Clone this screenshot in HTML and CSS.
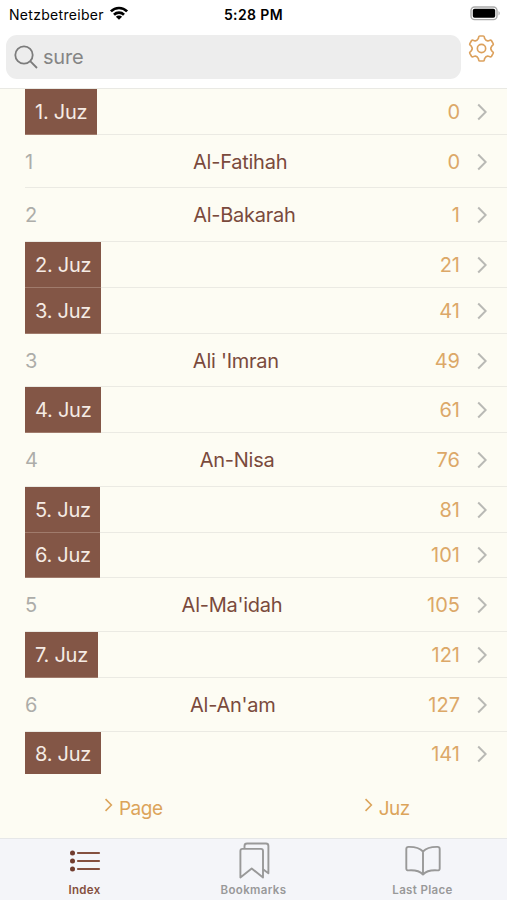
FILE: index.html
```
<!DOCTYPE html>
<html lang="en">
<head>
  <meta charset="UTF-8">
  <meta name="viewport" content="width=device-width, initial-scale=1.0">
  <title>Index</title>
  <link rel="stylesheet" href="styles.css">
</head>
<body>
  <svg class="defs" width="0" height="0">
    <symbol id="chevron" viewBox="0 0 10 18">
      <path d="M1.2 1.5 L8.7 9 L1.2 16.5" fill="none" stroke="currentColor" stroke-width="2"/>
    </symbol>
  </svg>

  <div class="app">
    <header>
      <div class="status-bar">
        <div class="carrier">
          <span>Netzbetreiber</span>
          <svg width="20" height="14" viewBox="0 0 20 14">
            <g fill="none" stroke="#000" stroke-width="2.7">
              <path d="M1.9 5.4 A11.4 11.4 0 0 1 18.1 5.4"/>
              <path d="M5 8.7 A7.1 7.1 0 0 1 15 8.7"/>
            </g>
            <path d="M10 13.8 L6.9 10.8 A4.4 4.4 0 0 1 13.1 10.8 Z"/>
          </svg>
        </div>
        <div class="time">5:28 PM</div>
        <div class="battery">
          <svg width="31" height="15" viewBox="0 0 31 15">
            <rect x="1" y="1" width="26" height="12.6" rx="3.6" fill="#fff" stroke="#aaa" stroke-width="1.4"/>
            <rect x="2.8" y="2.8" width="22.4" height="9" rx="1.8"/>
            <path d="M28.6 5 Q30.6 7.2 28.6 9.6 Z" fill="#999"/>
          </svg>
        </div>
      </div>
      <div class="search-row">
        <div class="search">
          <svg width="24" height="24" viewBox="0 0 24 24" fill="none" stroke="#7c7c7c" stroke-width="1.8">
            <circle cx="10" cy="10" r="8.7"/>
            <path d="M16.2 16.2 L23 23"/>
          </svg>
          <span>sure</span>
        </div>
        <svg class="gear" width="27" height="27" viewBox="0 0 28 28" fill="none" stroke="#dca15d" stroke-width="1.7" stroke-linejoin="round">
          <path d="M12.3 1 H15.7 Q16.7 1 16.9 2 L17.2 3.6 Q18.9 6.9 21.4 5.9 L22.8 5.4 Q23.8 5.1 24.4 6 L26.1 8.9 Q26.6 9.8 25.8 10.5 L24.6 11.6 Q22.6 14 24.6 16.4 L25.8 17.5 Q26.6 18.2 26.1 19.1 L24.4 22 Q23.8 22.9 22.8 22.6 L21.4 22.1 Q18.9 21.1 17.2 24.4 L16.9 26 Q16.7 27 15.7 27 H12.3 Q11.3 27 11.1 26 L10.8 24.4 Q9.1 21.1 6.6 22.1 L5.2 22.6 Q4.2 22.9 3.6 22 L1.9 19.1 Q1.4 18.2 2.2 17.5 L3.4 16.4 Q5.4 14 3.4 11.6 L2.2 10.5 Q1.4 9.8 1.9 8.9 L3.6 6 Q4.2 5.1 5.2 5.4 L6.6 5.9 Q9.1 6.9 10.8 3.6 L11.1 2 Q11.3 1 12.3 1 Z"/>
          <circle cx="14" cy="14" r="4.3"/>
        </svg>
      </div>
    </header>

    <main class="list">
      <div class="row juz"><span class="tag">1. Juz</span><span class="page">0</span><svg class="arrow"><use href="#chevron"/></svg></div>
      <div class="row"><div class="sure"><span class="num">1</span><span class="name">Al-Fatihah</span><span class="page">0</span></div><svg class="arrow"><use href="#chevron"/></svg></div>
      <div class="row"><div class="sure"><span class="num">2</span><span class="name">Al-Bakarah</span><span class="page">1</span></div><svg class="arrow"><use href="#chevron"/></svg></div>
      <div class="row juz"><span class="tag">2. Juz</span><span class="page">21</span><svg class="arrow"><use href="#chevron"/></svg></div>
      <div class="row juz"><span class="tag">3. Juz</span><span class="page">41</span><svg class="arrow"><use href="#chevron"/></svg></div>
      <div class="row"><div class="sure"><span class="num">3</span><span class="name">Ali 'Imran</span><span class="page">49</span></div><svg class="arrow"><use href="#chevron"/></svg></div>
      <div class="row juz"><span class="tag">4. Juz</span><span class="page">61</span><svg class="arrow"><use href="#chevron"/></svg></div>
      <div class="row"><div class="sure"><span class="num">4</span><span class="name">An-Nisa</span><span class="page">76</span></div><svg class="arrow"><use href="#chevron"/></svg></div>
      <div class="row juz"><span class="tag">5. Juz</span><span class="page">81</span><svg class="arrow"><use href="#chevron"/></svg></div>
      <div class="row juz"><span class="tag">6. Juz</span><span class="page">101</span><svg class="arrow"><use href="#chevron"/></svg></div>
      <div class="row"><div class="sure"><span class="num">5</span><span class="name">Al-Ma'idah</span><span class="page">105</span></div><svg class="arrow"><use href="#chevron"/></svg></div>
      <div class="row juz"><span class="tag">7. Juz</span><span class="page">121</span><svg class="arrow"><use href="#chevron"/></svg></div>
      <div class="row"><div class="sure"><span class="num">6</span><span class="name">Al-An'am</span><span class="page">127</span></div><svg class="arrow"><use href="#chevron"/></svg></div>
      <div class="row juz"><span class="tag">8. Juz</span><span class="page">141</span><svg class="arrow"><use href="#chevron"/></svg></div>
    </main>

    <div class="jump">
      <div class="jump-link"><svg><use href="#chevron"/></svg><span>Page</span></div>
      <div class="jump-link"><svg><use href="#chevron"/></svg><span>Juz</span></div>
    </div>

    <nav class="tabs">
      <div class="tab active">
        <svg width="36" height="42" viewBox="0 0 36 42" fill="none" stroke="currentColor" stroke-width="2.2" stroke-linecap="round">
          <path d="M11 14 H32 M11 22 H32 M11 30 H32"/>
          <g fill="#713c2e" stroke="none">
            <circle cx="5.5" cy="14" r="2.5"/>
            <circle cx="5.5" cy="22" r="2.5"/>
            <circle cx="5.5" cy="30" r="2.5"/>
          </g>
        </svg>
        <span>Index</span>
      </div>
      <div class="tab">
        <svg width="36" height="42" viewBox="0 0 36 42" fill="none" stroke="currentColor" stroke-width="1.9" stroke-linejoin="round">
          <path d="M4.4 38.5 V11.9 Q4.4 9.9 6.4 9.9 H25 Q27 9.9 27 11.9 V38.5 L15.7 29.5 Z"/>
          <path d="M8.5 9.9 V7 Q8.5 4.5 11 4.5 H30 Q32.4 4.5 32.4 7 V34.2 L27 30.2"/>
        </svg>
        <span>Bookmarks</span>
      </div>
      <div class="tab">
        <svg width="36" height="42" viewBox="0 0 36 42" fill="none" stroke="currentColor" stroke-width="1.9" stroke-linejoin="round">
          <path d="M18 12.5 Q13.5 7.7 3.6 7.9 Q1.3 8 1.3 10 V29.5 Q1.3 31.5 3.6 31.4 Q13.5 30.7 18 35.5 Q22.5 30.7 32.4 31.4 Q34.7 31.5 34.7 29.5 V10 Q34.7 8 32.4 7.9 Q22.5 7.7 18 12.5 V35.5"/>
        </svg>
        <span>Last Place</span>
      </div>
    </nav>
  </div>
</body>
</html>
```
FILE: styles.css
```
* {
  box-sizing: border-box;
}

body {
  margin: 0;
  background-color: #fdfcf3;
  font-family: Inter, "Liberation Sans", sans-serif;
}

svg {
  display: block;
  flex-shrink: 0;
}

.defs {
  display: none;
}

.app {
  display: flex;
  flex-direction: column;
  height: 900px;
  overflow: hidden;
}

/* Status bar and search */
header {
  height: 89px;
  flex-shrink: 0;
  background-color: #fff;
  border-bottom: 1px solid #e9e9e4;
}

.status-bar {
  display: grid;
  grid-template-columns: 1fr auto 1fr;
  align-items: center;
  height: 28px;
  padding: 0 6px 0 9px;
  font-size: 14px;
}

.carrier {
  display: flex;
  align-items: center;
  gap: 5px;
  letter-spacing: 0.3px;
}

.carrier svg {
  margin-top: -2px;
}

.time {
  margin-left: -3px;
  font-weight: 600;
  letter-spacing: 0.4px;
}

.battery {
  justify-self: end;
  margin-top: -1px;
}

.search-row {
  display: flex;
  padding: 7px 12px 0 6px;
}

.search {
  display: flex;
  align-items: center;
  gap: 5px;
  width: 455px;
  height: 44px;
  padding-left: 8px;
  border-radius: 11px;
  background-color: #ededed;
  color: #858585;
  font-size: 20px;
  letter-spacing: -0.2px;
}

.gear {
  margin-left: 7px;
}

/* List of chapters and sections */
.list {
  height: 685px;
  flex-shrink: 0;
  overflow: hidden;
}

.row {
  display: flex;
  align-items: center;
  height: 53.8px;
  margin-left: 25px;
  padding-right: 20px;
  border-bottom: 1px solid #ebeae3;
  font-size: 20px;
  letter-spacing: -0.25px;
}

.row.juz {
  height: 45.7px;
}

.sure {
  display: flex;
  justify-content: space-between;
  flex: 1;
  padding-top: 1px;
}

.tag {
  display: flex;
  align-items: center;
  align-self: stretch;
  margin-bottom: -1px;
  padding: 1px 9.5px 0 10px;
  border-bottom: 1px solid #a07b6c;
  background-color: #835646;
  color: #f5ebe4;
}

.num {
  color: #adada9;
}

.name {
  color: #7a4a3c;
}

.page {
  color: #dca868;
  letter-spacing: 0;
}

.juz .page {
  margin-left: auto;
  padding-top: 1px;
}

.arrow {
  width: 10px;
  height: 18px;
  margin: 1px 0 0 17px;
  color: #b9b9b5;
}

/* Page / Juz links */
.jump {
  display: grid;
  grid-template-columns: 1fr 1fr;
  flex: 1;
}

.jump-link {
  display: flex;
  justify-content: center;
  gap: 6px;
  padding: 23px 0 0 13px;
  color: #dca45a;
  font-size: 19px;
  letter-spacing: -0.5px;
  line-height: 24px;
}

.jump-link svg {
  width: 9px;
  height: 14px;
  margin-top: 1px;
}

/* Bottom tabs */
.tabs {
  display: grid;
  grid-template-columns: repeat(3, 1fr);
  height: 62px;
  flex-shrink: 0;
  border-top: 1px solid #e6e7e8;
  background-color: #f4f5f9;
}

.tab {
  display: flex;
  flex-direction: column;
  align-items: center;
  color: #999;
  font-size: 11.5px;
  font-weight: 600;
  letter-spacing: 0.35px;
  line-height: 18px;
}

.tab.active {
  color: #84503f;
}
```
